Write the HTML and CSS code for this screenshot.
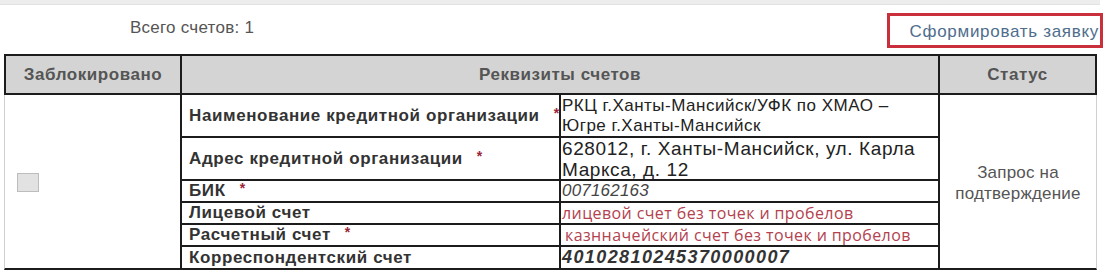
FILE: index.html
```html
<!DOCTYPE html>
<html lang="ru">
<head>
<meta charset="utf-8">
<title>Счета</title>
<link rel="stylesheet" href="styles.css">
</head>
<body>
<div class="topbar"></div>
<div class="summary">
  <div class="total">Всего счетов: 1</div>
  <div class="action"><a class="link" href="#">Сформировать заявку</a></div>
</div>
<div class="grid">
  <div class="h h-first">Заблокировано</div>
  <div class="h h-mid">Реквизиты счетов</div>
  <div class="h h-last">Статус</div>

  <div class="blocked"><span class="checkbox"></span></div>

  <div class="lbl">Наименование кредитной организации<span class="req">*</span></div>
  <div class="val val-name">РКЦ г.Ханты-Мансийск/УФК по ХМАО –<br>Югре г.Ханты-Мансийск</div>

  <div class="lbl">Адрес кредитной организации<span class="req">*</span></div>
  <div class="val val-addr">628012, г. Ханты-Мансийск, ул. Карла<br>Маркса, д. 12</div>

  <div class="lbl">БИК<span class="req">*</span></div>
  <div class="val val-bik">007162163</div>

  <div class="lbl">Лицевой счет</div>
  <div class="val val-hint">лицевой счет без точек и пробелов</div>

  <div class="lbl">Расчетный счет<span class="req">*</span></div>
  <div class="val val-hint val-indent">казнначейский счет без точек и пробелов</div>

  <div class="lbl">Корреспондентский счет</div>
  <div class="val val-corr">40102810245370000007</div>

  <div class="status">Запрос на<br>подтверждение</div>
</div>
</body>
</html>
```

FILE: styles.css
```css
html, body {
  margin: 0;
  padding: 0;
  background: #ffffff;
}
body {
  font-family: "Liberation Sans", Arial, sans-serif;
  color: #333;
  width: 1111px;
}
.topbar {
  height: 4px;
  background: #ededed;
  border-bottom: 1px solid #e2e2e2;
  width: 1100px;
}
.summary {
  height: 49px;
  display: flex;
  justify-content: space-between;
  align-items: flex-start;
}
.total {
  margin-left: 130px;
  margin-top: 13px;
  font-size: 17px;
  color: #555;
  letter-spacing: 0.25px;
}
.action {
  margin-top: 8px;
  margin-right: 8px;
  width: 210px;
  height: 29px;
  border: 3px solid #c9303c;
  display: flex;
  justify-content: flex-end;
  align-items: flex-end;
}
.link {
  color: #4f6d8c;
  text-decoration: none;
  font-size: 17px;
  letter-spacing: 0.7px;
  margin-right: 1px;
  margin-bottom: 3px;
  line-height: 20px;
}
.grid {
  margin-left: 4px;
  display: grid;
  grid-template-columns: 178px 379px 379px 157px;
  grid-template-rows: 41px 43px 43px 22px 22px 22px 23px;
}
.h {
  background: #d4d4d4;
  border-top: 2px solid #1c1c1c;
  border-bottom: 2px solid #1c1c1c;
  border-right: 2px solid #1c1c1c;
  display: flex;
  align-items: center;
  justify-content: center;
  font-weight: bold;
  font-size: 17px;
  color: #555;
  letter-spacing: 0.55px;
}
.h-first {
  border-left: 2px solid #1c1c1c;
}
.h-mid {
  grid-column: 2 / 4;
}
.blocked {
  grid-row: 2 / 8;
  grid-column: 1;
  border-left: 1px solid #cfcfcf;
  border-right: 2px solid #1c1c1c;
  border-bottom: 2px solid #1c1c1c;
  display: flex;
  align-items: center;
  padding-left: 12px;
}
.checkbox {
  display: block;
  width: 20px;
  height: 17px;
  background: #e2e2e2;
  border: 1px solid #bdbdbd;
  margin-top: 1px;
}
.lbl {
  grid-column: 2;
  border-right: 2px solid #1c1c1c;
  border-bottom: 2px solid #1c1c1c;
  display: flex;
  align-items: center;
  padding-left: 7px;
  font-weight: bold;
  font-size: 17px;
  color: #333;
  letter-spacing: 0.6px;
  white-space: nowrap;
}
.req {
  color: #9a2538;
  font-size: 14px;
  margin-left: 14px;
  align-self: center;
  position: relative;
  top: -3px;
}
.val {
  grid-column: 3;
  border-right: 2px solid #1c1c1c;
  border-bottom: 2px solid #1c1c1c;
  display: flex;
  align-items: center;
  padding-left: 1px;
  white-space: nowrap;
  color: #222;
}
.val-name {
  font-size: 17px;
  line-height: 20px;
  letter-spacing: 0.5px;
}
.val-addr {
  font-size: 19px;
  line-height: 21px;
  letter-spacing: 0.6px;
}
.val-bik {
  font-style: italic;
  font-size: 17px;
  color: #444;
  letter-spacing: 0.2px;
}
.val-hint {
  font-family: "Open Sans", "Noto Sans", sans-serif;
  font-size: 16px;
  color: #b3424e;
  letter-spacing: 0.4px;
}
.val-indent {
  padding-left: 4px;
}
.val-corr {
  font-style: italic;
  font-weight: bold;
  font-size: 18px;
  color: #333;
  letter-spacing: 1.4px;
}
.status {
  grid-row: 2 / 8;
  grid-column: 4;
  border-right: 1px solid #cfcfcf;
  border-bottom: 2px solid #1c1c1c;
  display: flex;
  align-items: center;
  justify-content: center;
  text-align: center;
  font-size: 17px;
  line-height: 21px;
  color: #555;
  letter-spacing: 0.2px;
  padding-top: 3px;
}
```
